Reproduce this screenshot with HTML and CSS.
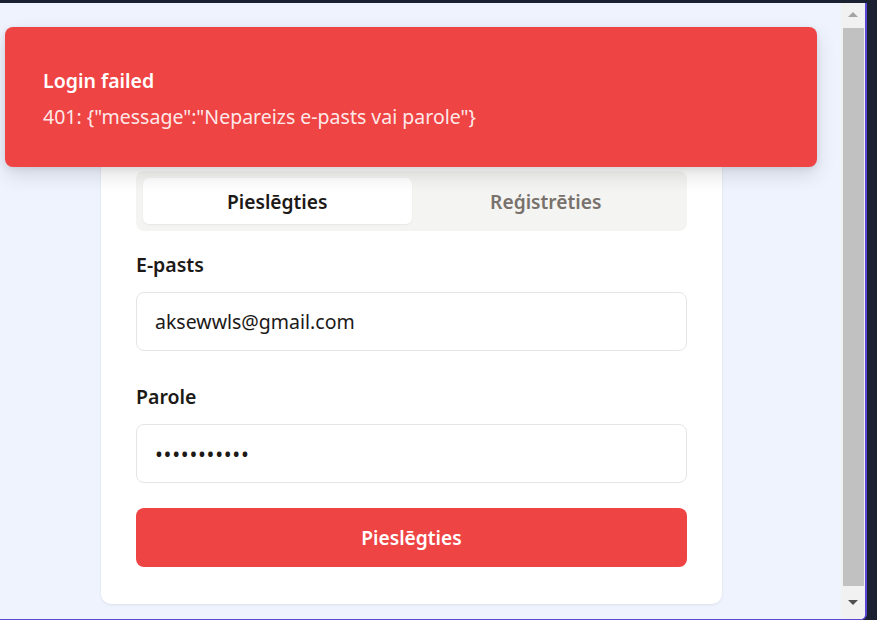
FILE: index.html
```html
<!DOCTYPE html>
<html lang="lv">
<head>
<meta charset="utf-8">
<title>Pieslēgties</title>
<link rel="stylesheet" href="styles.css">
</head>
<body>
<div class="frame">
  <div class="viewport">
    <div class="toast">
      <div class="toast-title">Login failed</div>
      <div class="toast-msg">401: {"message":"Nepareizs e-pasts vai parole"}</div>
    </div>
    <div class="card">
      <div class="tabs">
        <div class="tab active">Pieslēgties</div>
        <div class="tab">Reģistrēties</div>
      </div>
      <label class="label">E-pasts</label>
      <div class="input">aksewwls@gmail.com</div>
      <label class="label">Parole</label>
      <div class="input pass">•••••••••••</div>
      <div class="btn">Pieslēgties</div>
    </div>
  </div>
  <div class="scrollbar">
    <div class="arrow up"></div>
    <div class="thumb"></div>
    <div class="arrow down"></div>
  </div>
</div>
</body>
</html>
```
FILE: styles.css
```css
* { box-sizing: border-box; }
html, body { margin: 0; height: 100%; }
body {
  background: #1b2131;
  font-family: "Noto Sans", "Open Sans", sans-serif;
  overflow: hidden;
}
.frame {
  margin-top: 3px;
  width: 867px;
  height: 617px;
  display: flex;
  border-right: 2px solid #5a48d4;
  border-bottom: 1px solid #5a48d4;
  border-bottom-right-radius: 6px;
  overflow: hidden;
  background: #eef3fe;
}
.viewport {
  flex: 1;
  position: relative;
  background: #eef3fe;
}
.scrollbar {
  width: 24px;
  background: #f1f1f1;
  display: flex;
  flex-direction: column;
  align-items: center;
}
.arrow {
  width: 0; height: 0;
  border-left: 5px solid transparent;
  border-right: 5px solid transparent;
}
.arrow.up { border-bottom: 5px solid #a3a3a3; margin-top: 9px; margin-bottom: 11px; }
.arrow.down { border-top: 5px solid #505050; margin-top: 14px; }
.thumb {
  width: 21px;
  height: 558px;
  background: #c1c1c1;
}
.toast {
  position: absolute;
  left: 5px;
  top: 24px;
  width: 812px;
  height: 140px;
  background: #ef4444;
  border-radius: 8px;
  box-shadow: 0 8px 20px rgba(0,0,0,0.12), 0 2px 6px rgba(0,0,0,0.08);
  padding: 41px 38px 0;
  color: #fff;
  z-index: 2;
}
.toast-title {
  font-size: 19.5px;
  font-weight: 600;
  line-height: 26px;
}
.toast-msg {
  margin-top: 10px;
  font-size: 19.5px;
  line-height: 26px;
  color: rgba(255,255,255,0.9);
}
.card {
  margin-left: 101px;
  margin-top: 97px;
  width: 621px;
  background: #fff;
  border-radius: 10px;
  box-shadow: 0 1px 3px rgba(0,0,0,0.08);
  padding: 71px 35px 37px;
  display: flex;
  flex-direction: column;
}
.tabs {
  height: 60px;
  background: #f4f4f2;
  border-radius: 8px;
  padding: 7px;
  display: flex;
}
.tab {
  flex: 1;
  display: flex;
  align-items: center;
  justify-content: center;
  font-size: 19.2px;
  font-weight: 600;
  color: #78716c;
  border-radius: 6px;
}
.tab.active {
  background: #fff;
  color: #1c1917;
  box-shadow: 0 1px 2px rgba(0,0,0,0.06);
}
.label {
  margin-top: 21px;
  font-size: 19.5px;
  font-weight: 600;
  color: #1c1917;
  line-height: 26px;
  margin-bottom: 14px;
}
.input {
  height: 59px;
  border: 1px solid #e7e5e4;
  border-radius: 8px;
  padding: 0 18px;
  display: flex;
  align-items: center;
  font-size: 19.5px;
  color: #1c1917;
}
.input + .label { margin-top: 33px; }
.input.pass { font-size: 21px; letter-spacing: 0.7px; }
.btn {
  margin-top: 25px;
  height: 59px;
  background: #ef4444;
  border-radius: 8px;
  color: #fff;
  font-size: 19.2px;
  font-weight: 600;
  display: flex;
  align-items: center;
  justify-content: center;
}
```
